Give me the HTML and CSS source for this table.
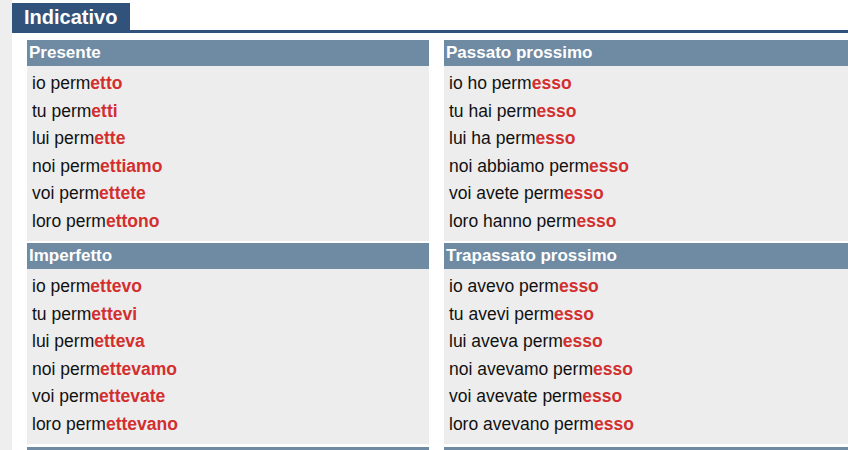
FILE: index.html
```html
<!DOCTYPE html>
<html lang="it">
<head>
<meta charset="utf-8">
<title>Indicativo</title>
<link rel="stylesheet" href="styles.css">
</head>
<body>
<div class="strip"></div>
<main class="main">
  <div class="mood-bar"><h2 class="mood-tab">Indicativo</h2></div>
  <div class="grid">
    <section class="tense">
      <h3 class="tense-head">Presente</h3>
      <ul class="forms">
        <li>io perm<b>etto</b></li>
        <li>tu perm<b>etti</b></li>
        <li>lui perm<b>ette</b></li>
        <li>noi perm<b>ettiamo</b></li>
        <li>voi perm<b>ettete</b></li>
        <li>loro perm<b>ettono</b></li>
      </ul>
    </section>
    <section class="tense">
      <h3 class="tense-head">Passato prossimo</h3>
      <ul class="forms">
        <li>io ho perm<b>esso</b></li>
        <li>tu hai perm<b>esso</b></li>
        <li>lui ha perm<b>esso</b></li>
        <li>noi abbiamo perm<b>esso</b></li>
        <li>voi avete perm<b>esso</b></li>
        <li>loro hanno perm<b>esso</b></li>
      </ul>
    </section>
    <section class="tense">
      <h3 class="tense-head">Imperfetto</h3>
      <ul class="forms">
        <li>io perm<b>ettevo</b></li>
        <li>tu perm<b>ettevi</b></li>
        <li>lui perm<b>etteva</b></li>
        <li>noi perm<b>ettevamo</b></li>
        <li>voi perm<b>ettevate</b></li>
        <li>loro perm<b>ettevano</b></li>
      </ul>
    </section>
    <section class="tense">
      <h3 class="tense-head">Trapassato prossimo</h3>
      <ul class="forms">
        <li>io avevo perm<b>esso</b></li>
        <li>tu avevi perm<b>esso</b></li>
        <li>lui aveva perm<b>esso</b></li>
        <li>noi avevamo perm<b>esso</b></li>
        <li>voi avevate perm<b>esso</b></li>
        <li>loro avevano perm<b>esso</b></li>
      </ul>
    </section>
    <section class="tense tense-next"><div class="tense-head"></div></section>
    <section class="tense tense-next"><div class="tense-head"></div></section>
  </div>
</main>
</body>
</html>
```
FILE: styles.css
```css
html, body {
  margin: 0;
  padding: 0;
  background: #ffffff;
  overflow: hidden;
  height: 450px;
}
body {
  display: flex;
  font-family: "Liberation Sans", Arial, sans-serif;
  color: #111111;
}
.strip {
  width: 12px;
  flex: none;
  background: #eeeeee;
}
.main {
  flex: 1;
  min-width: 0;
}
.mood-bar {
  margin-top: 3px;
  border-bottom: 3px solid #31527a;
  display: flex;
}
.mood-tab {
  margin: 0;
  width: 118px;
  box-sizing: border-box;
  height: 27px;
  line-height: 28px;
  padding-left: 12px;
  background: #31527a;
  color: #ffffff;
  font-size: 20px;
  font-weight: bold;
}
.grid {
  display: grid;
  grid-template-columns: 402px 404px;
  column-gap: 15px;
  row-gap: 2px;
  padding: 7px 0 0 15px;
}
.tense {
  background: #ededed;
}
.tense-next {
  margin-top: 1px;
}
.tense-head {
  margin: 0;
  height: 26px;
  line-height: 26px;
  padding-left: 2px;
  background: #6f8aa3;
  color: #ffffff;
  font-size: 17px;
  font-weight: bold;
}
.forms {
  list-style: none;
  margin: 0;
  padding: 4px 0 6px 5px;
  font-size: 17.5px;
}
.forms li {
  height: 27.5px;
  line-height: 27.5px;
}
.forms b {
  color: #d32f2f;
  font-weight: bold;
}
```
